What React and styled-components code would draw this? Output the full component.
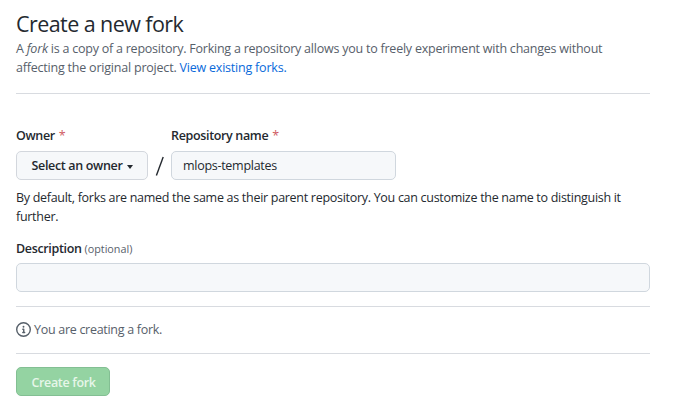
import React from "react";
import styled, { createGlobalStyle } from "styled-components";

const GlobalStyle = createGlobalStyle`
  * { box-sizing: border-box; }
  body {
    margin: 0;
    background: #fff;
    color: #24292f;
    font: 12.5px/19px "Open Sans", "Noto Sans", sans-serif;
  }
`;

const Page = styled.main`
  width: 634px;
  margin-left: 16px;
  padding-top: 9px;
`;

const Title = styled.h1`
  margin: 0;
  font-size: 21.5px;
  font-weight: 400;
  line-height: 30px;
  letter-spacing: -0.57px;
`;

const Line = styled.span`
  display: block;
  white-space: nowrap;
  letter-spacing: ${(p) => p.$spacing || "-0.29px"};
`;

const Intro = styled.p`
  margin: 0;
  color: #57606a;
`;

const Link = styled.a`
  color: #0969da;
  text-decoration: none;
`;

const Divider = styled.hr`
  height: 1px;
  margin: ${(p) => p.$margin};
  border: 0;
  background: #d8dbe0;
`;

const Fields = styled.div`
  display: flex;
  align-items: flex-end;
`;

const Field = styled.div`
  width: ${(p) => p.$width};
`;

const Label = styled.label`
  display: block;
  height: 19px;
  margin-bottom: ${(p) => p.$gap || "6px"};
  font-weight: 600;
  white-space: nowrap;
  letter-spacing: -0.34px;
`;

const Required = styled.span`
  margin-left: 1px;
  color: #cf5a62;
  font-weight: 400;
`;

const Optional = styled.small`
  color: #57606a;
  font-size: 10.8px;
  font-weight: 400;
  letter-spacing: 0;
`;

const Button = styled.button`
  display: flex;
  align-items: center;
  justify-content: center;
  width: ${(p) => p.$width};
  height: 29px;
  padding: ${(p) => (p.$primary ? "2px 0 0 1px" : "0")};
  border: 1px solid ${(p) => (p.$primary ? "#83bf93" : "#d3d7dd")};
  border-radius: 5px;
  background: ${(p) => (p.$primary ? "#94d3a2" : "#f6f8fa")};
  color: ${(p) => (p.$primary ? "#e6f6e9" : "#24292f")};
  font: inherit;
  font-weight: 600;
  white-space: nowrap;
  letter-spacing: -0.33px;
`;

const Caret = styled.span`
  margin: 2px 0 0 4px;
  border: 3.5px solid transparent;
  border-top-width: 4px;
  border-top-color: currentColor;
  border-bottom: 0;
`;

const Slash = styled.span`
  width: 23px;
  height: 29px;
  text-align: center;
`;

const Input = styled.input`
  display: block;
  width: 100%;
  height: 29px;
  padding: 0 11px 1px;
  border: 1px solid #d0d7de;
  border-radius: 5px;
  background: #f6f8fa;
  color: #24292f;
  font: inherit;
  outline: 0;
  letter-spacing: -0.28px;
`;

const Help = styled.p`
  margin: 8px 0 13px;
`;

const Notice = styled.div`
  display: flex;
  align-items: center;
  gap: 3px;
  height: 19px;
  color: #57606a;
`;

export default function App() {
  return (
    <>
      <GlobalStyle />
      <Page>
        <Title>Create a new fork</Title>
        <Intro>
          <Line $spacing="-0.23px">
            A <em>fork</em> is a copy of a repository. Forking a repository allows you to freely experiment with changes without
          </Line>
          <Line $spacing="-0.21px">
            affecting the original project. <Link>View existing forks.</Link>
          </Line>
        </Intro>
        <Divider $margin="16px 0 32px" />
        <Fields>
          <Field $width="132px">
            <Label>
              Owner <Required>*</Required>
            </Label>
            <Button $width="132px">
              Select an owner
              <Caret />
            </Button>
          </Field>
          <Slash>
            <svg width="23" height="29" viewBox="0 0 23 29">
              <path d="M8.4 24.5 15.2 6" stroke="#24292f" strokeWidth="1.4" />
            </svg>
          </Slash>
          <Field $width="225px">
            <Label>
              Repository name <Required>*</Required>
            </Label>
            <Input defaultValue="mlops-templates" />
          </Field>
        </Fields>
        <Help>
          <Line>By default, forks are named the same as their parent repository. You can customize the name to distinguish it</Line>
          <Line>further.</Line>
        </Help>
        <Label $gap="5px">
          Description <Optional>(optional)</Optional>
        </Label>
        <Input />
        <Divider $margin="14px 0 13px" />
        <Notice>
          <svg width="15" height="15" viewBox="0 0 16 16" fill="currentColor">
            <path d="M0 8a8 8 0 1 1 16 0A8 8 0 0 1 0 8Zm8-6.5a6.5 6.5 0 1 0 0 13 6.5 6.5 0 0 0 0-13ZM6.5 7.75A.75.75 0 0 1 7.25 7h1a.75.75 0 0 1 .75.75v2.75h.25a.75.75 0 0 1 0 1.5h-2a.75.75 0 0 1 0-1.5h.25v-2h-.25a.75.75 0 0 1-.75-.75ZM8 6a1 1 0 1 1 0-2 1 1 0 0 1 0 2Z" />
          </svg>
          <Line>You are creating a fork.</Line>
        </Notice>
        <Divider $margin="14px 0 13px" />
        <Button $primary $width="94px">
          Create fork
        </Button>
      </Page>
    </>
  );
}
